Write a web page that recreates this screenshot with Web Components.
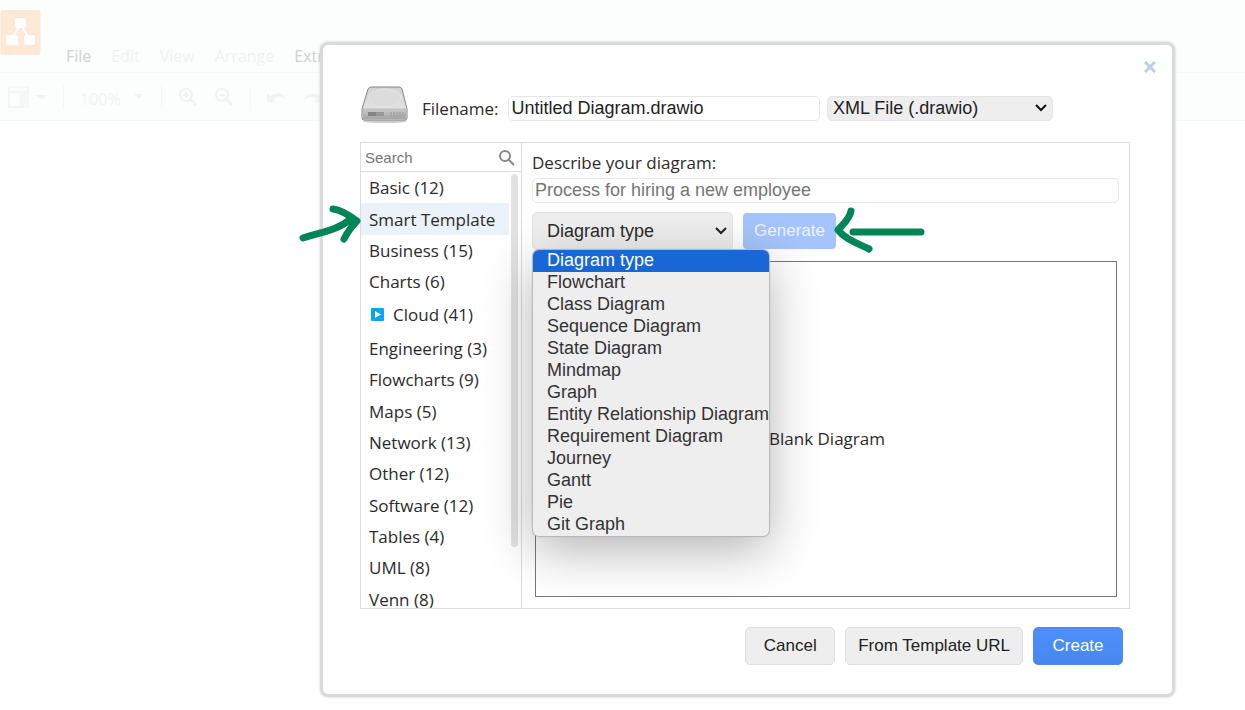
<!DOCTYPE html>
<html lang="en">
<head>
<meta charset="utf-8">
<title>Untitled Diagram</title>
<style>
  body {
    margin: 0;
    background: #fff;
    color: #2b2b2b;
    font: 17px "Open Sans", "Noto Sans", sans-serif;
  }
</style>
</head>
<body>
<editor-chrome></editor-chrome>
<template-dialog>
  <file-row slot="file"></file-row>
  <category-list slot="side"></category-list>
  <smart-template slot="main"></smart-template>
</template-dialog>
<arrow-notes></arrow-notes>

<script>
// faded editor menu and toolbar behind the dialog
class EditorChrome extends HTMLElement {
  constructor() {
    super();
    this.attachShadow({ mode: 'open' });
    this.shadowRoot.innerHTML = `
      <style>
        :host { display: block; background: #fbfefd; font-size: 16px; }
        header { display: flex; height: 72px; border-bottom: 1px solid #f6f8f8; }
        .logo { width: 41px; height: 45px; margin-top: 10px; }
        nav { display: flex; align-items: flex-end; gap: 20px; margin-left: 25px; padding-bottom: 4px; }
        nav a { color: #eff1f1; text-decoration: none; line-height: 24px; }
        nav a.on { color: #cfd1d1; }
        .tools { display: flex; align-items: center; height: 47px; padding-left: 7px; border-bottom: 1px solid #f6f8f8; color: #f1f3f3; }
        button { display: flex; align-items: center; border: 0; padding: 0; background: none; color: inherit; font: inherit; }
        i { width: 1px; height: 24px; margin: 0 16px; background: #f5f7f7; }
        .zoom { gap: 12px; padding-top: 4px; }
        .pad { margin-right: 16px; }
      </style>
      <header>
        <svg class="logo" viewBox="0 0 41 45">
          <rect x="0.5" width="40" height="45" rx="3" fill="#fde9d6"/>
          <path d="M20 15 12 28M21 15l8 13" stroke="#fff" stroke-width="2"/>
          <g fill="#fff"><rect x="15" y="8" width="11" height="10" rx="2"/><rect x="6" y="25" width="12" height="10" rx="2"/><rect x="24" y="25" width="11" height="10" rx="2"/></g>
        </svg>
        <nav>
          <a href="#" class="on">File</a><a href="#">Edit</a><a href="#">View</a><a href="#">Arrange</a><a href="#" class="on">Extras</a>
        </nav>
      </header>
      <div class="tools">
        <button aria-label="View panels">
          <svg width="40" height="24" viewBox="0 0 40 24"><path d="M2 2h19v20H2zM2 7h19M14 7v15" fill="none" stroke="currentColor" stroke-width="1.500"/><path d="M14 7h7v15h-7z" fill="#f6f7f7"/><path d="M29 10h11l-5 5z" fill="currentColor"/></svg>
        </button>
        <i></i>
        <button class="zoom">100%
          <svg width="12" height="12" viewBox="0 0 12 12"><path d="M1 1h10L6 6z" fill="currentColor"/></svg>
        </button>
        <i></i>
        <button class="pad" aria-label="Zoom in">
          <svg width="20" height="20" viewBox="0 0 20 20" fill="none" stroke="currentColor" stroke-width="2"><circle cx="8" cy="8" r="6"/><path d="m12 12 6 6" stroke-width="3"/><path d="M5 8h6M8 5v6"/></svg>
        </button>
        <button aria-label="Zoom out">
          <svg width="20" height="20" viewBox="0 0 20 20" fill="none" stroke="currentColor" stroke-width="2"><circle cx="8" cy="8" r="6"/><path d="m12 12 6 6" stroke-width="3"/><path d="M5 8h6"/></svg>
        </button>
        <i></i>
        <button class="pad" aria-label="Undo">
          <svg width="20" height="16" viewBox="0 0 20 16" fill="currentColor"><path d="M0 4v9h9L6 10q7-5 13 1-4-11-16-4z"/></svg>
        </button>
        <button aria-label="Redo">
          <svg width="20" height="16" viewBox="0 0 20 16" fill="currentColor"><path d="M20 4v9h-9l3-3Q7 5 1 11q4-11 16-4z"/></svg>
        </button>
      </div>
    `;
  }
}
customElements.define('editor-chrome', EditorChrome);

class TemplateDialog extends HTMLElement {
  constructor() {
    super();
    this.attachShadow({ mode: 'open' });
    this.shadowRoot.innerHTML = `
      <style>
        :host {
          display: block;
          position: absolute;
          top: 42px;
          left: 320px;
          right: 70px;
          box-sizing: border-box;
          padding: 0 42px 29px 37px;
          background: #fff;
          border: 3px solid #d9dada;
          border-radius: 8px;
          box-shadow: 0 0 3px #d0d0d0;
        }
        .top { display: flex; justify-content: flex-end; height: 36px; margin-right: -26px; }
        .close { width: 12px; height: 12px; margin-top: 16px; padding: 0; border: 0; background: none; }
        .close svg { display: block; }
        .panel { display: grid; grid-template-columns: 161px 1fr; height: 465px; margin-top: 7px; border: 1px solid #dcdcdc; }
        .side { overflow: hidden; border-right: 1px solid #dcdcdc; }
        .actions { display: flex; justify-content: flex-end; gap: 10px; margin: 18px 7px 0 0; }
        .actions button {
          min-width: 90px;
          height: 38px;
          padding: 0 12px;
          border: 1px solid #dfdfe2;
          border-radius: 5px;
          background: #eee;
          color: #222;
          font: 17px "Liberation Sans", Arial, sans-serif;
        }
        .actions .primary { border-color: #4b8bf5; background: linear-gradient(#4d90fe, #4787ed); color: #fff; }
      </style>
      <div class="top">
        <button class="close" aria-label="Close">
          <svg width="12" height="12" viewBox="0 0 12 12"><path d="m1 1 10 10M11 1 1 11" stroke="#c1cee0" stroke-width="3"/></svg>
        </button>
      </div>
      <slot name="file"></slot>
      <div class="panel">
        <div class="side"><slot name="side"></slot></div>
        <slot name="main"></slot>
      </div>
      <div class="actions">
        <button>Cancel</button>
        <button>From Template URL</button>
        <button class="primary">Create</button>
      </div>
    `;
  }
}
customElements.define('template-dialog', TemplateDialog);

class FileRow extends HTMLElement {
  constructor() {
    super();
    this.attachShadow({ mode: 'open' });
    this.shadowRoot.innerHTML = `
      <style>
        :host { display: flex; align-items: center; height: 54px; padding-right: 77px; }
        .disk { margin-bottom: 6px; }
        label { margin: 0 9px 0 14px; }
        input, select { box-sizing: border-box; height: 25px; border-radius: 5px; color: #222; font: 18px "Liberation Sans", Arial, sans-serif; }
        input { flex: 1; min-width: 0; padding: 0 3px; border: 1px solid #e6e6ea; }
        .pick { display: grid; width: 226px; margin-left: 7px; }
        .pick > * { grid-area: 1 / 1; }
        select { appearance: none; padding: 0 5px; border: 1px solid #e6e6e8; background: #eee; font-size: 18px; }
        .pick svg { align-self: center; justify-self: end; margin-right: 6px; pointer-events: none; }
      </style>
      <svg class="disk" width="48" height="40" viewBox="0 0 48 40">
        <defs>
          <linearGradient id="lid" x2="0" y2="1"><stop stop-color="#d2d2d2"/><stop offset="1" stop-color="#e9e9e9"/></linearGradient>
          <linearGradient id="front" x2="0" y2="1"><stop stop-color="#c9c9c9"/><stop offset="1" stop-color="#a4a4a4"/></linearGradient>
        </defs>
        <ellipse cx="25" cy="36" rx="22" ry="2" fill="#ccc"/>
        <path d="M11 2h28q2 0 3 2l5 20v9q0 2-2 2H4q-2 0-2-2v-9L8 4q1-2 3-2z" fill="url(#lid)" stroke="#858585"/>
        <ellipse cx="25" cy="13" rx="16" ry="9" fill="#dcdcdc" stroke="#e6e6e6"/>
        <path d="M3 24h43v9q0 1-1 1H4q-1 0-1-1z" fill="url(#front)"/>
        <path d="M3 24h43" stroke="#bcbcbc"/>
        <path d="M8 27h8v4H8z" fill="#858585"/><path d="M16 27h8v4h-8z" fill="#999"/>
        <path d="M31 27v5M34 27v5M37 27v5M40 27v5M43 27v5" stroke="#999"/>
      </svg>
      <label for="name">Filename:</label>
      <input id="name" type="text" value="Untitled Diagram.drawio">
      <div class="pick">
        <select aria-label="File format"><option>XML File (.drawio)</option></select>
        <svg width="12" height="8" viewBox="0 0 12 8"><path d="m1 1 5 5 5-5" fill="none" stroke="#111" stroke-width="2"/></svg>
      </div>
    `;
  }
}
customElements.define('file-row', FileRow);

class CategoryList extends HTMLElement {
  constructor() {
    super();
    this.attachShadow({ mode: 'open' });
    const names = ['Basic (12)', 'Smart Template', 'Business (15)', 'Charts (6)', 'Cloud (41)', 'Engineering (3)', 'Flowcharts (9)',
      'Maps (5)', 'Network (13)', 'Other (12)', 'Software (12)', 'Tables (4)', 'UML (8)', 'Venn (8)'];
    this.shadowRoot.innerHTML = `
      <style>
        :host { display: block; height: 465px; font-size: 17px; }
        .search { display: flex; align-items: center; height: 28px; padding: 0 6px 0 4px; border-bottom: 1px solid #dcdcdc; }
        input { flex: 1; min-width: 0; padding: 0; border: 0; outline: 0; font: 15px "Liberation Sans", Arial, sans-serif; }
        input::placeholder { color: #777; }
        .scroll { display: flex; justify-content: space-between; }
        ul { flex: 1; margin: 0 2px 0 0; padding: 0; list-style: none; }
        li { display: flex; align-items: center; height: 31px; padding-left: 8px; white-space: nowrap; }
        li:nth-child(3n + 2) { height: 32px; }
        li.selected { background: #ebf2fa; }
        li.folder { height: 34px; gap: 9px; margin-bottom: 2px; padding-left: 10px; }
        .bar { width: 7px; height: 373px; margin: 2px 3px 0 0; border-radius: 4px; background: #e2e2e2; }
      </style>
      <div class="search">
        <input type="search" placeholder="Search" aria-label="Search">
        <svg width="17" height="17" viewBox="0 0 17 17" fill="none" stroke="#888" stroke-width="2"><circle cx="7" cy="7" r="5"/><path d="m10 10 6 6"/></svg>
      </div>
      <div class="scroll"><ul></ul><div class="bar"></div></div>
    `;
    const list = this.shadowRoot.querySelector('ul');
    names.forEach(name => {
      const item = document.createElement('li');
      item.textContent = name;
      if (name === 'Smart Template') item.className = 'selected';
      if (name.startsWith('Cloud')) {
        item.className = 'folder';
        item.insertAdjacentHTML('afterbegin',
          '<svg width="13" height="13" viewBox="0 0 13 13"><rect width="13" height="13" rx="1" fill="#04a7f0"/><path d="M4 3l6 3.500-6 3.500z" fill="#fff"/></svg>');
      }
      list.appendChild(item);
    });
  }
}
customElements.define('category-list', CategoryList);

class SmartTemplate extends HTMLElement {
  constructor() {
    super();
    this.attachShadow({ mode: 'open' });
    const types = ['Diagram type', 'Flowchart', 'Class Diagram', 'Sequence Diagram', 'State Diagram', 'Mindmap', 'Graph',
      'Entity Relationship Diagram', 'Requirement Diagram', 'Journey', 'Gantt', 'Pie', 'Git Graph'];
    this.shadowRoot.innerHTML = `
      <style>
        :host { display: flex; flex-direction: column; padding: 8px 10px 11px 10px; }
        label { line-height: 24px; }
        input, select, .generate { box-sizing: border-box; font: 18px "Liberation Sans", Arial, sans-serif; }
        input { height: 25px; margin-top: 3px; padding: 0 2px; border: 1px solid #e6e6ea; border-radius: 5px; }
        input::placeholder { color: #757575; }
        .row { display: flex; align-items: center; gap: 10px; margin-top: 9px; }
        .pick { display: grid; position: relative; width: 201px; }
        .pick > select, .pick > svg { grid-area: 1 / 1; }
        select { appearance: none; height: 38px; padding: 0 14px; border: 1px solid #e3e3e5; border-radius: 5px; background: #eee; color: #2b2b2b; }
        .pick > svg { align-self: center; justify-self: end; margin-right: 6px; pointer-events: none; }
        .generate { width: 93px; height: 36px; padding: 0; border: 0; border-radius: 4px; background: #a5c4fb; color: #edf4ff; font-size: 17px; }
        ul {
          position: absolute;
          top: 38px;
          left: 1px;
          z-index: 2;
          margin: 0;
          padding: 0;
          overflow: hidden;
          list-style: none;
          background: #eee;
          border-radius: 6px;
          box-shadow: 0 0 1px 1px #b5b5b5, 0 14px 50px rgba(0, 0, 0, .3);
          color: #333;
          font: 18px "Liberation Sans", Arial, sans-serif;
        }
        li { height: 22px; padding: 0 0 0 14px; line-height: 21px; white-space: nowrap; }
        li.on { background: #1967d6; color: #fff; }
        .blank { flex: 1; display: grid; place-items: center; margin: 11px 2px 0 3px; padding: 18px 0 0 2px; border: 1px solid #777; }
      </style>
      <label for="prompt">Describe your diagram:</label>
      <input id="prompt" type="text" placeholder="Process for hiring a new employee">
      <div class="row">
        <div class="pick">
          <select aria-label="Diagram type"><option>Diagram type</option></select>
          <svg width="12" height="8" viewBox="0 0 12 8"><path d="m1 1 5 5 5-5" fill="none" stroke="#222" stroke-width="2"/></svg>
          <ul role="listbox" aria-label="Diagram type"></ul>
        </div>
        <button class="generate">Generate</button>
      </div>
      <div class="blank">Blank Diagram</div>
    `;
    const list = this.shadowRoot.querySelector('ul');
    types.forEach((type, i) => {
      const item = document.createElement('li');
      item.setAttribute('role', 'option');
      item.textContent = type;
      if (i === 0) item.className = 'on';
      list.appendChild(item);
    });
  }
}
customElements.define('smart-template', SmartTemplate);

// hand drawn arrows over the dialog
class ArrowNotes extends HTMLElement {
  constructor() {
    super();
    this.attachShadow({ mode: 'open' });
    this.shadowRoot.innerHTML = `
      <style>
        :host { display: block; position: absolute; top: 200px; left: 295px; pointer-events: none; }
        svg { display: block; }
      </style>
      <svg width="640" height="60" viewBox="295 200 640 60" fill="none" stroke="#008556" stroke-width="7" stroke-linecap="round" stroke-linejoin="round">
        <path d="M303 238c18-6 34-7 49-20M333 209c8 1 16 6 24 12-6 6-10 12-13 18"/>
        <path d="M851 211c-1 8-9 14-13 19 7 9 19 13 31 19M853 232h68"/>
      </svg>
    `;
  }
}
customElements.define('arrow-notes', ArrowNotes);
</script>
</body>
</html>
